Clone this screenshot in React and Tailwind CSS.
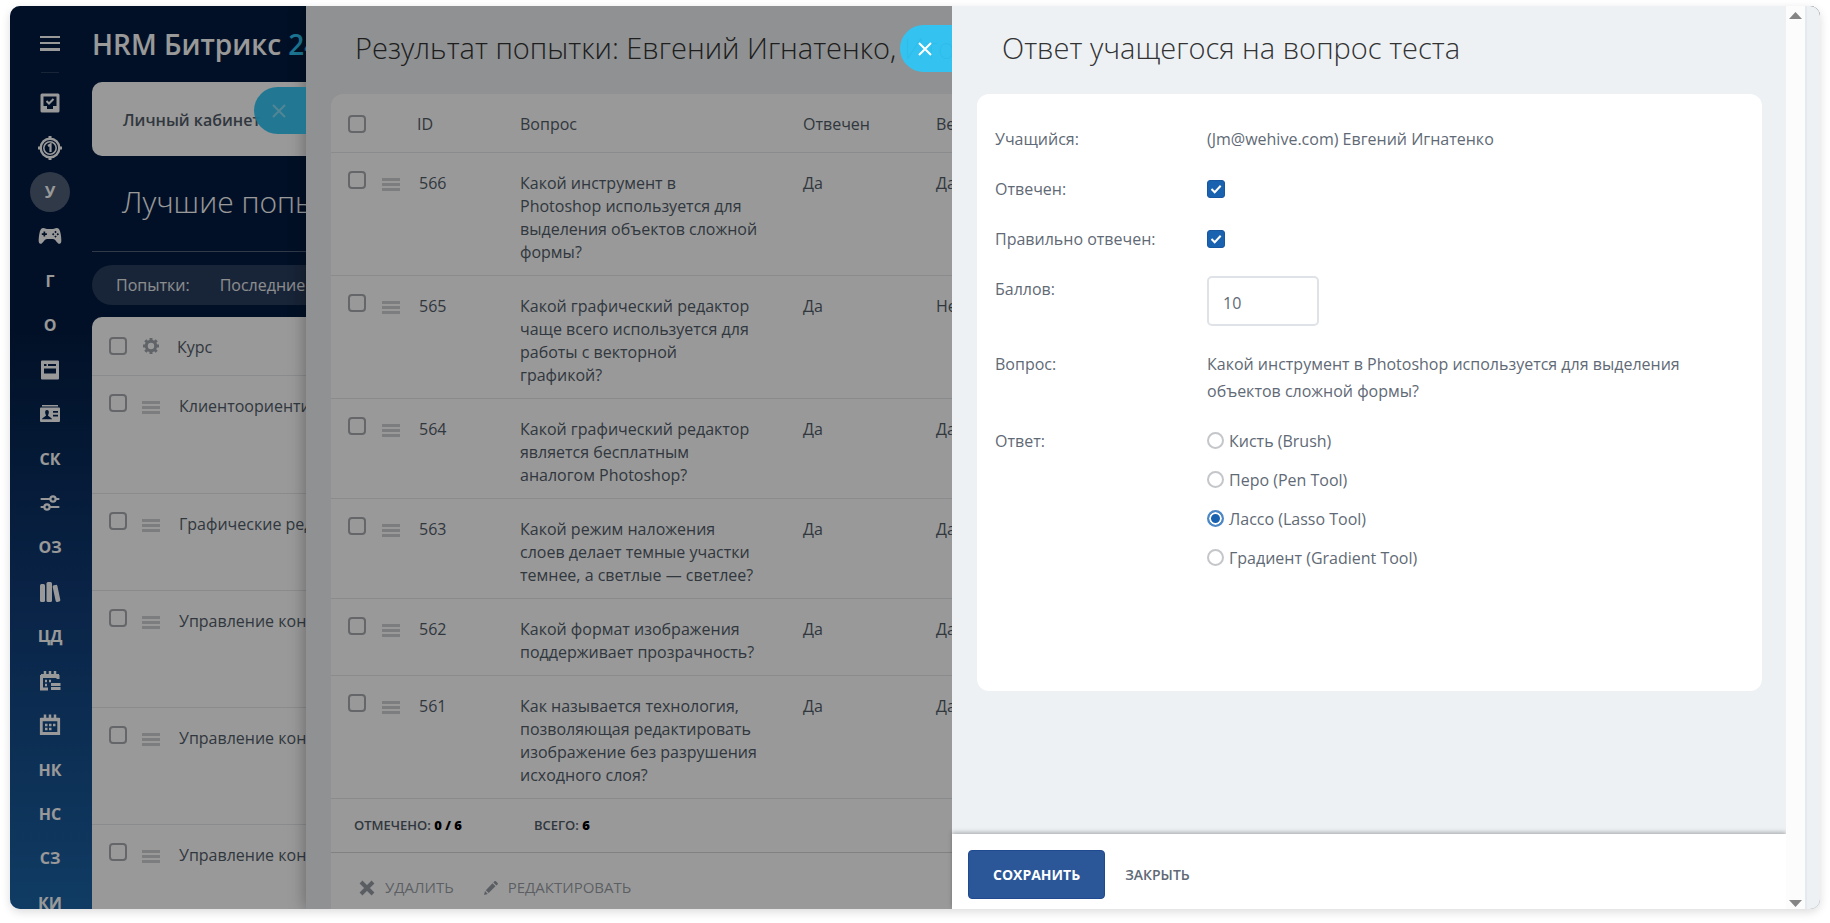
import React, {useState} from 'react';

const menuItems = [
    {id: 'tasks', label: 'Задачи', icon: TaskIcon},
    {id: 'goals', label: 'Цели', icon: TargetIcon},
    {id: 'study', label: 'У', active: true},
    {id: 'games', label: 'Игры', icon: GamepadIcon},
    {id: 'g', label: 'Г'},
    {id: 'o', label: 'О'},
    {id: 'forms', label: 'Формы', icon: FormIcon},
    {id: 'cards', label: 'Карточки', icon: CardIcon},
    {id: 'sk', label: 'СК'},
    {id: 'settings', label: 'Настройки', icon: SlidersIcon},
    {id: 'oz', label: 'ОЗ'},
    {id: 'library', label: 'Библиотека', icon: BooksIcon},
    {id: 'cd', label: 'ЦД'},
    {id: 'schedule', label: 'График', icon: ScheduleIcon},
    {id: 'calendar', label: 'Календарь', icon: CalendarIcon},
    {id: 'nk', label: 'НК'},
    {id: 'ns', label: 'НС'},
    {id: 'sz', label: 'СЗ'},
    {id: 'ki', label: 'КИ'},
];

const courses = [
    {id: 1, name: 'Клиентоориентированность', height: 'h-[118px]'},
    {id: 2, name: 'Графические редакторы', height: 'h-[97px]'},
    {id: 3, name: 'Управление конфликтами', height: 'h-[117px]'},
    {id: 4, name: 'Управление конфликтами', height: 'h-[117px]'},
    {id: 5, name: 'Управление конфликтами', height: 'h-[117px]'},
];

const attempts = [
    {id: 566, question: 'Какой инструмент в Photoshop используется для выделения объектов сложной формы?', answered: 'Да', correct: 'Да'},
    {id: 565, question: 'Какой графический редактор чаще всего используется для работы с векторной графикой?', answered: 'Да', correct: 'Нет'},
    {id: 564, question: 'Какой графический редактор является бесплатным аналогом Photoshop?', answered: 'Да', correct: 'Да'},
    {id: 563, question: 'Какой режим наложения слоев делает темные участки темнее, а светлые — светлее?', answered: 'Да', correct: 'Да'},
    {id: 562, question: 'Какой формат изображения поддерживает прозрачность?', answered: 'Да', correct: 'Да'},
    {id: 561, question: 'Как называется технология, позволяющая редактировать изображение без разрушения исходного слоя?', answered: 'Да', correct: 'Да'},
];

const answers = ['Кисть (Brush)', 'Перо (Pen Tool)', 'Лассо (Lasso Tool)', 'Градиент (Gradient Tool)'];

function TaskIcon() {
    return (
        <svg width="20" height="20" viewBox="0 0 20 20" fill="none">
            <path fill="currentColor" fillRule="evenodd" d="M2 0.500h16a1.500 1.500 0 0 1 1.500 1.500v16a1.500 1.500 0 0 1-1.500 1.500H2a1.500 1.500 0 0 1-1.500-1.500V2a1.500 1.500 0 0 1 1.500-1.500ZM3.500 3.500v9.500h3.500v3h6v-3h3.500V3.500h-13Z"/>
            <path d="M6.500 8l2.500 2.500L13.500 6" stroke="currentColor" strokeWidth="2"/>
        </svg>
    );
}

function TargetIcon() {
    return (
        <svg width="26" height="26" viewBox="0 0 26 26" fill="none" stroke="currentColor">
            <circle cx="13" cy="13" r="9.300" strokeWidth="2.400"/>
            <circle cx="13" cy="13" r="6.200" strokeWidth="1.600"/>
            <path d="M13 1v3M13 22v3M1 13h3M22 13h3" strokeWidth="3"/>
            <path d="M11 11l2.500-1.500V17" strokeWidth="2.200"/>
        </svg>
    );
}

function GamepadIcon() {
    return (
        <svg width="24" height="18" viewBox="0 0 24 18">
            <path fill="currentColor" fillRule="evenodd" d="M5.500 1C3 1 2 3 1.400 6.500.9 9.500.4 13 .8 15c.3 1.600 1.700 2.300 3 1.400C5.500 15.200 6.800 12 9 12h6c2.200 0 3.500 3.200 5.200 4.400 1.300.9 2.700.2 3-1.400.4-2-.1-5.500-.6-8.500C22 3 21 1 18.500 1c-1.600 0-2 1-3.500 1H9C7.500 2 7.100 1 5.500 1ZM5.500 4.500h1.700v1.700h1.700v1.700H7.200v1.700H5.500V7.900H3.800V6.200h1.700V4.500ZM17.500 3.800l1.200 1.200-1.200 1.200L16.300 5l1.200-1.200Zm-2.300 2.300 1.200 1.200-1.200 1.200L14 7.300l1.200-1.200Zm4.600 0L21 7.300l-1.200 1.200-1.200-1.200 1.200-1.200Zm-2.300 2.300 1.200 1.200-1.200 1.200-1.200-1.200 1.200-1.200Z"/>
        </svg>
    );
}

function FormIcon() {
    return (
        <svg width="20" height="20" viewBox="0 0 20 20">
            <path fill="currentColor" fillRule="evenodd" d="M2 .5h16a1 1 0 0 1 1 1v17a1 1 0 0 1-1 1H2a1 1 0 0 1-1-1v-17a1 1 0 0 1 1-1ZM4 4v2h2.500V4H4Zm4 0v2h8V4H8ZM4 8.500v5h12v-5H4Z"/>
        </svg>
    );
}

function CardIcon() {
    return (
        <svg width="22" height="18" viewBox="0 0 22 18">
            <path fill="currentColor" fillRule="evenodd" d="M3 0h16v1.500H3V0ZM2 2.500h18a1 1 0 0 1 1 1V16a1 1 0 0 1-1 1H2a1 1 0 0 1-1-1V3.500a1 1 0 0 1 1-1ZM8 5C6.500 5 6 6.300 6.200 8c.1 1 .6 1.600.8 2.200C7 11.500 3.500 12 3 14.300h10c-.5-2.300-4-2.800-4-4.100.2-.6.700-1.200.8-2.200C10 6.300 9.500 5 8 5ZM14 6v1.800h5V6h-5Zm0 3.800v1.800h5V9.800h-5Z"/>
        </svg>
    );
}

function SlidersIcon() {
    return (
        <svg width="20" height="18" viewBox="0 0 20 18" fill="none" stroke="currentColor" strokeWidth="2.200" strokeLinecap="round">
            <path d="M1.500 5H10M16 5h2.500M1.500 13H4M10 13h8.500"/>
            <circle cx="13" cy="5" r="2.600"/>
            <circle cx="7" cy="13" r="2.600"/>
        </svg>
    );
}

function BooksIcon() {
    return (
        <svg width="22" height="22" viewBox="0 0 22 22" fill="currentColor">
            <rect x="1" y="3" width="5" height="18" rx="1.500"/>
            <rect x="7.500" y="1" width="5.500" height="20" rx="1.500"/>
            <rect x="15" y="4" width="4.800" height="17" rx="1.500" transform="rotate(-12 17 12)"/>
        </svg>
    );
}

function ScheduleIcon() {
    return (
        <svg width="22" height="20" viewBox="0 0 22 20" fill="none" stroke="currentColor">
            <path d="M19 8V5.500H2.500V18H9" strokeWidth="3"/>
            <path d="M2 4.500h18" strokeWidth="3"/>
            <path d="M6 0v3M11 0v3M16 0v3" strokeWidth="2.500"/>
            <path d="M6 10h2M10 10h2M6 14h2" strokeWidth="2.500"/>
            <path d="M12 13.500h9.500M12 17.500h9.500" strokeWidth="2.800"/>
        </svg>
    );
}

function CalendarIcon() {
    return (
        <svg width="22" height="22" viewBox="0 0 22 22" fill="none" stroke="currentColor">
            <path d="M2.300 5.500h17.400v14H2.300z" strokeWidth="2.800"/>
            <path d="M1.500 5.500h19" strokeWidth="3.500"/>
            <path d="M6 .5v4M11 .5v4M16 .5v4" strokeWidth="2.500"/>
            <path d="M6 11h2.500M10 11h2.500M14 11h2.500M6 15h2.500M10 15h2.500" strokeWidth="2.500"/>
        </svg>
    );
}

function GearIcon() {
    return (
        <svg width="18" height="18" viewBox="0 0 18 18" fill="none" stroke="currentColor">
            <circle cx="9" cy="9" r="4.700" strokeWidth="3"/>
            <path d="M9 1v3M9 14v3M1 9h3M14 9h3M3.300 3.300l2.200 2.200M12.500 12.500l2.200 2.200M3.300 14.700l2.200-2.200M12.500 5.500l2.200-2.200" strokeWidth="3"/>
        </svg>
    );
}

function DragIcon() {
    return (
        <svg width="18" height="15" viewBox="0 0 18 15" className="text-[#cdd0d4]" fill="currentColor">
            <rect width="18" height="3"/>
            <rect y="5" width="18" height="3"/>
            <rect y="10" width="18" height="3"/>
        </svg>
    );
}

function RowCheckbox({label}) {
    return (
        <input
            type="checkbox"
            aria-label={label}
            className="block appearance-none w-[18px] h-[18px] border-2 border-[#a8abaf] rounded-[4px] checked:bg-[#1962b0]"
        />
    );
}

function CloseTab({label, muted}) {
    return (
        <button
            aria-label={label}
            className="absolute -left-[52px] w-[52px] h-[47px] pr-0.5 rounded-l-full bg-[#2fc6f6]/95 text-white flex items-center justify-center cursor-pointer"
        >
            <svg width="14" height="14" viewBox="0 0 14 14" fill="none" stroke="currentColor" strokeWidth="2" className={muted ? 'opacity-40' : ''}>
                <path d="M1 1l12 12M13 1L1 13"/>
            </svg>
        </button>
    );
}

function FormRow({label, htmlFor, children}) {
    return (
        <div className="flex">
            {htmlFor
                ? <label htmlFor={htmlFor} className="w-[212px] shrink-0">{label}</label>
                : <div className="w-[212px] shrink-0">{label}</div>}
            <div className="flex-1">{children}</div>
        </div>
    );
}

function FormCheckbox({id, checked, onChange}) {
    return (
        <div className="relative w-[18px] h-[18px] mt-1">
            <input
                id={id}
                type="checkbox"
                checked={checked}
                onChange={(e) => onChange(e.target.checked)}
                className="peer block appearance-none w-[18px] h-[18px] rounded-[3px] border border-[#b5b9be] checked:bg-[#1962b0] checked:border-[#1757a0]"
            />
            <svg viewBox="0 0 18 18" className="absolute inset-0 hidden peer-checked:block pointer-events-none" fill="none" stroke="white" strokeWidth="2">
                <path d="M4.500 9l3.200 3.200 6-6.400"/>
            </svg>
        </div>
    );
}

function Sidebar() {
    return (
        <aside className="w-[82px] pr-0.5 shrink-0 flex flex-col items-center text-white">
            <button aria-label="Меню" className="mt-[29px] cursor-pointer">
                <svg width="20" height="17" viewBox="0 0 20 17" fill="currentColor">
                    <rect y="1" width="20" height="2"/>
                    <rect y="7" width="20" height="2"/>
                    <rect y="13" width="20" height="3"/>
                </svg>
            </button>
            <div className="mt-5 w-[18px] h-px bg-white/15"></div>
            <nav className="flex-1 -mb-4 mt-2 flex flex-col">
                {menuItems.map((item) => {
                    const Icon = item.icon;
                    return (
                        <a key={item.id} href="#" aria-label={item.label} className="flex-1 flex items-center justify-center">
                            <span className={item.active
                                ? 'w-10 h-10 rounded-full bg-white/30 flex items-center justify-center font-bold text-base'
                                : 'font-bold text-base'}
                            >
                                {Icon ? <Icon/> : item.label}
                            </span>
                        </a>
                    );
                })}
            </nav>
        </aside>
    );
}

function CoursesPage() {
    return (
        <div className="flex-1 min-w-0 flex flex-col whitespace-nowrap">
            <div className="h-[76px] shrink-0 pt-[18px] text-[28px] leading-[40px] font-semibold text-white">
                HRM Битрикс <span className="text-[#2fc6f6]">24</span>
            </div>
            <div className="h-[74px] shrink-0 rounded-[10px] bg-white flex items-center px-[31px] pt-0.5">
                <a href="#" className="text-base font-semibold text-[#525c69]">Личный кабинет</a>
            </div>
            <h1 className="mt-[26px] pl-[30px] h-[70px] shrink-0 text-[30px] leading-[40px] font-light text-white border-b border-white/30">
                Лучшие попытки
            </h1>
            <div className="mt-[13px] h-10 shrink-0 rounded-full bg-white/15 flex items-center gap-[30px] px-6 text-base text-white/90">
                <span>Попытки:</span>
                <a href="#">Последние</a>
            </div>
            <div className="mt-3 flex-1 min-h-0 overflow-hidden rounded-tl-[10px] bg-white text-[#525c69] text-base leading-[23px]">
                <table className="w-full table-fixed">
                    <thead>
                    <tr className="h-[58px] border-b border-[#e5e8ea]">
                        <th className="w-[50px] pl-[17px]"><RowCheckbox label="Выбрать все курсы"/></th>
                        <th className="w-[35px] text-[#a0a5ac]"><GearIcon/></th>
                        <th className="text-left font-normal pt-1">Курс</th>
                    </tr>
                    </thead>
                    <tbody>
                    {courses.map((course) => (
                        <tr key={course.id} className={`${course.height} border-b border-[#e5e8ea] align-top`}>
                            <td className="pl-[17px] pt-[18px]"><RowCheckbox label={course.name}/></td>
                            <td className="pt-[25px]"><DragIcon/></td>
                            <td className="pt-[19px] pl-0.5">{course.name}</td>
                        </tr>
                    ))}
                    </tbody>
                </table>
            </div>
        </div>
    );
}

function AttemptPanel() {
    return (
        <section className="absolute inset-y-0 left-[296px] right-0 bg-[#eef2f4] shadow-[0_0_16px_rgba(0,0,0,0.35)]">
            <div className="absolute left-0 top-[81px]"><CloseTab label="Закрыть попытку" muted/></div>
            <div className="h-full flex flex-col overflow-hidden">
                <h2 className="h-[88px] shrink-0 pl-[49px] pt-[21px] text-[29px] leading-[42px] font-light text-[#333] whitespace-nowrap">
                    Результат попытки: Евгений Игнатенко, Итоговый тест
                </h2>
                <div className="ml-[25px] flex-1 rounded-tl-[12px] bg-white text-[#525c69]">
                    <table className="w-full table-fixed text-base leading-[23px]">
                        <thead>
                        <tr className="h-[58px] border-b border-[#e5e8ea] text-left">
                            <th className="w-[51px] pl-[17px] pt-0.5"><RowCheckbox label="Выбрать все вопросы"/></th>
                            <th className="w-[35px]"></th>
                            <th className="w-[103px] font-normal pt-1">ID</th>
                            <th className="w-[283px] font-normal pt-1">Вопрос</th>
                            <th className="w-[133px] font-normal pt-1">Отвечен</th>
                            <th className="font-normal pt-1">Верно</th>
                        </tr>
                        </thead>
                        <tbody>
                        {attempts.map((row) => (
                            <tr key={row.id} className="border-b border-[#e5e8ea] align-top">
                                <td className="pl-[17px] pt-[18px]"><RowCheckbox label={`Вопрос ${row.id}`}/></td>
                                <td className="pt-[25px]"><DragIcon/></td>
                                <td className="pt-[19px] pl-0.5">{row.id}</td>
                                <td className="pt-[19px] pb-[11px] pr-[43px]">{row.question}</td>
                                <td className="pt-[19px]">{row.answered}</td>
                                <td className="pt-[19px]">{row.correct}</td>
                            </tr>
                        ))}
                        </tbody>
                    </table>
                    <div className="h-[54px] flex items-center gap-[72px] pl-[23px] pt-0.5 border-b border-[#d5d8db] text-[13px] font-semibold">
                        <span>ОТМЕЧЕНО: <b className="text-black">0 / 6</b></span>
                        <span>ВСЕГО: <b className="text-black">6</b></span>
                    </div>
                    <div className="h-[70px] flex items-center gap-[30px] pl-[28px] text-[15px] text-[#525c69]/60">
                        <button className="flex items-center gap-2.5">
                            <svg width="16" height="16" viewBox="0 0 16 16" fill="none" stroke="currentColor" strokeWidth="4">
                                <path d="M2 2l12 12M14 2L2 14"/>
                            </svg>
                            УДАЛИТЬ
                        </button>
                        <button className="flex items-center gap-2.5">
                            <svg width="14" height="14" viewBox="0 0 14 14" fill="currentColor">
                                <path d="M0 14l1-4 2.800 3L0 14ZM1.800 9.200L8.500 2.300l3 3L4.700 12.100ZM9.300 1.500L10.500.3c.4-.4 1-.4 1.400 0l1.700 1.700c.4.400.4 1 0 1.400l-1.200 1.200Z"/>
                            </svg>
                            РЕДАКТИРОВАТЬ
                        </button>
                    </div>
                </div>
            </div>
        </section>
    );
}

function AnswerPanel() {
    const [answered, setAnswered] = useState(true);
    const [correct, setCorrect] = useState(true);
    const [points, setPoints] = useState('10');
    const [answer, setAnswer] = useState('Лассо (Lasso Tool)');

    return (
        <section className="absolute inset-y-0 left-[942px] right-0 flex bg-[#edf1f4]">
            <div className="absolute left-0 top-[19px]"><CloseTab label="Закрыть ответ"/></div>
            <div className="flex-1 min-w-0 flex flex-col">
                <h2 className="h-[88px] shrink-0 pl-[50px] pt-[21px] text-[29px] leading-[42px] font-light text-[#333]">
                    Ответ учащегося на вопрос теста
                </h2>
                <div className="ml-[25px] mr-6 min-h-[597px] rounded-[12px] bg-white pl-[18px] pr-8 pt-8 flex flex-col gap-[23px] text-base leading-[27px] text-[#5f6a76]">
                    <FormRow label="Учащийся:">(Jm@wehive.com) Евгений Игнатенко</FormRow>
                    <FormRow label="Отвечен:" htmlFor="answered">
                        <FormCheckbox id="answered" checked={answered} onChange={setAnswered}/>
                    </FormRow>
                    <FormRow label="Правильно отвечен:" htmlFor="correct">
                        <FormCheckbox id="correct" checked={correct} onChange={setCorrect}/>
                    </FormRow>
                    <FormRow label="Баллов:" htmlFor="points">
                        <input
                            id="points"
                            type="text"
                            value={points}
                            onChange={(e) => setPoints(e.target.value)}
                            className="block w-[112px] h-[50px] mb-0.5 px-[14px] pt-1 rounded-[5px] border-2 border-[#dfe3e7] outline-none"
                        />
                    </FormRow>
                    <FormRow label="Вопрос:">
                        Какой инструмент в Photoshop используется для выделения объектов сложной формы?
                    </FormRow>
                    <FormRow label="Ответ:">
                        <div className="flex flex-col gap-3">
                            {answers.map((item) => (
                                <label key={item} className="flex items-center gap-[5px]">
                                    <input
                                        type="radio"
                                        name="answer"
                                        checked={answer === item}
                                        onChange={() => setAnswer(item)}
                                        className="appearance-none w-[17px] h-[17px] -mt-0.5 rounded-full border-2 border-[#c4c6c9] checked:border-[#4c87c6] checked:bg-[#1962b0] checked:shadow-[inset_0_0_0_2px_white]"
                                    />
                                    {item}
                                </label>
                            ))}
                        </div>
                    </FormRow>
                </div>
                <div className="mt-auto h-[75px] shrink-0 bg-white shadow-[0_-2px_4px_rgba(0,0,0,0.25)] flex items-center pl-4 pt-1.5 gap-[20px] text-[14px]">
                    <button className="h-[49px] px-6 rounded-[4px] border border-[#1f4a90] bg-[#2b5698] font-bold text-white cursor-pointer">
                        СОХРАНИТЬ
                    </button>
                    <button className="font-semibold text-[#5f6a76] cursor-pointer">ЗАКРЫТЬ</button>
                </div>
            </div>
            <div className="w-[19px] shrink-0 bg-[#fcfcfc] flex flex-col justify-between items-center py-[6px] text-[#858585]">
                <svg width="13" height="7" viewBox="0 0 13 7" fill="currentColor"><path d="M6.500 0L13 7H0Z"/></svg>
                <svg width="13" height="7" viewBox="0 0 13 7" fill="currentColor" className="-mb-1"><path d="M0 0h13L6.500 7Z"/></svg>
            </div>
            <div className="w-[15px] shrink-0 border-l-2 border-[#e4eaed]"></div>
        </section>
    );
}

const App = () => {
    return (
        <div className="h-screen pt-[6px] px-[10px] pb-[14px] bg-white font-['Open_Sans',sans-serif]">
            <div className="relative h-full rounded-[10px] overflow-hidden flex bg-linear-to-b from-[#031b40] from-35% via-[#103b75] via-65% to-[#1b64a6] shadow-[0_3px_10px_rgba(0,0,0,0.14)]">
                <Sidebar/>
                <CoursesPage/>
                <AttemptPanel/>
                <div className="absolute inset-0 bg-black/40"></div>
                <AnswerPanel/>
            </div>
        </div>
    );
};

export default App;
